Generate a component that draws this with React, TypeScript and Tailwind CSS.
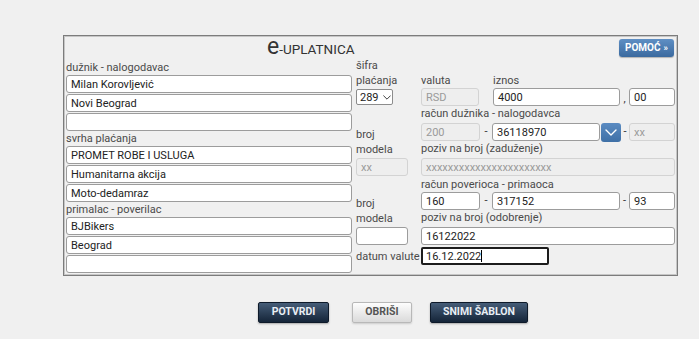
import React from "react";

const inp =
  "h-[18px] border border-[#9c9c9c] rounded-[3px] bg-white pl-[4px] flex items-center text-[11px] text-[#222] leading-none whitespace-nowrap overflow-hidden";
const dis =
  "h-[18px] border border-[#d3d3d3] rounded-[3px] bg-[#eeeeee] pl-[4px] flex items-center text-[11px] text-[#9a9a9a] leading-none whitespace-nowrap overflow-hidden";
const lbl = "h-[15px] text-[11px] leading-[15px] text-[#4a4a4a] whitespace-nowrap";

function Group({ label, values }: { label: string; values: string[] }) {
  return (
    <div className="flex flex-col">
      <div className={lbl}>{label}</div>
      <div className="flex flex-col gap-[1px]">
        {values.map((v, i) => (
          <div key={i} className={inp}>
            {v}
          </div>
        ))}
      </div>
    </div>
  );
}

function Chevron({ className, color, w }: { className?: string; color: string; w: number }) {
  return (
    <svg className={className} width={w} height={w / 2 + 1} viewBox="0 0 12 7" fill="none">
      <path d="M1 1 L6 6 L11 1" stroke={color} strokeWidth="1.4" strokeLinecap="round" strokeLinejoin="round" />
    </svg>
  );
}

export default function App() {
  return (
    <div className="w-[699px] h-[339px] bg-[#f0f0f0] font-['Roboto',sans-serif] pt-[35px] pl-[63px] overflow-hidden">
      <div className="w-[615px] border border-[#7c7c7c] shadow-[inset_1px_1px_0_#c6c6c6,inset_-1px_-1px_0_#c6c6c6] px-[2px] pb-[2px]">
        {/* header */}
        <div className="h-[22px] flex items-start">
          <div className="ml-[201px] flex items-baseline text-[#333]">
            <span className="text-[23px] leading-[22px]">e</span>
            <span className="text-[13.5px] leading-[22px]">-UPLATNICA</span>
          </div>
          <div className="ml-auto mr-[1px] mt-[3px] h-[18px] w-[55px] rounded-[3px] bg-linear-to-b from-[#5f8fc4] to-[#3b6a9f] flex items-center justify-center text-white text-[10px] font-bold leading-none shadow-[0_1px_1px_rgba(0,0,0,0.25)]">
            POMOĆ <span className="ml-[3px] text-[9px]">»</span>
          </div>
        </div>

        {/* body */}
        <div className="flex">
          {/* left column */}
          <div className="w-[286px] mt-[2px] flex flex-col">
            <Group label="dužnik - nalogodavac" values={["Milan Korovljević", "Novi Beograd", ""]} />
            <Group label="svrha plaćanja" values={["PROMET ROBE I USLUGA", "Humanitarna akcija", "Moto-dedamraz"]} />
            <Group label="primalac - poverilac" values={["BJBikers", "Beograd", ""]} />
          </div>

          {/* middle + right */}
          <div className="ml-[4px] w-[319px] flex flex-col">
            <div className="flex">
              {/* middle column */}
              <div className="w-[54px] flex flex-col">
                <div className="text-[11px] leading-[15px] text-[#4a4a4a]">
                  šifra
                  <br />
                  plaćanja
                </div>
                <div className="mt-[1px] h-[16px] w-[37px] border border-[#8c8c8c] rounded-[2px] bg-white flex items-center pl-[3px] text-[11px] text-[#222] leading-none">
                  289
                  <Chevron className="ml-[4px]" color="#333" w={8} />
                </div>
                <div className="mt-[22px] text-[11px] leading-[15px] text-[#4a4a4a]">
                  broj
                  <br />
                  modela
                </div>
                <div className={dis + " mt-[1px] w-[52px]"}>xx</div>
                <div className="mt-[20px] text-[11px] leading-[15px] text-[#4a4a4a]">
                  broj
                  <br />
                  modela
                </div>
                <div className={inp + " mt-[1px] w-[52px]"}></div>
              </div>

              {/* right column */}
              <div className="ml-[11px] w-[254px] pt-[15px] flex flex-col">
                <div className="flex">
                  <div className={lbl + " w-[72px]"}>valuta</div>
                  <div className={lbl}>iznos</div>
                </div>
                <div className="flex h-[18px] items-stretch">
                  <div className={dis + " w-[58px]"}>RSD</div>
                  <div className="w-[14px]" />
                  <div className={inp + " w-[127px]"}>4000</div>
                  <div className="w-[9px] flex items-end justify-center text-[11px] leading-[15px] text-[#333]">,</div>
                  <div className={inp + " w-[46px]"}>00</div>
                </div>

                <div className={lbl}>račun dužnika - nalogodavca</div>
                <div className="mt-[2px] flex h-[18px]">
                  <div className={dis + " w-[59px]"}>200</div>
                  <div className="w-[12px] flex items-center justify-center text-[11px] text-[#333]">-</div>
                  <div className={inp + " w-[108px]"}>36118970</div>
                  <div className="ml-[1px] w-[20px] h-[19px] rounded-[3px] bg-linear-to-b from-[#5a8bc2] to-[#3f70a6] flex items-center justify-center">
                    <Chevron color="#ffffff" w={12} />
                  </div>
                  <div className="w-[8px] flex items-center justify-center text-[11px] text-[#333]">-</div>
                  <div className={dis + " w-[46px]"}>xx</div>
                </div>

                <div className={lbl}>poziv na broj (zaduženje)</div>
                <div className={dis + " mt-[2px] w-[254px] text-[10.5px]"}>xxxxxxxxxxxxxxxxxxxxxxx</div>

                <div className={lbl + " mt-[1px]"}>račun poverioca - primaoca</div>
                <div className="flex h-[18px]">
                  <div className={inp + " w-[59px]"}>160</div>
                  <div className="w-[12px] flex items-center justify-center text-[11px] text-[#333]">-</div>
                  <div className={inp + " w-[128px]"}>317152</div>
                  <div className="w-[9px] flex items-center justify-center text-[11px] text-[#333]">-</div>
                  <div className={inp + " w-[46px]"}>93</div>
                </div>

                <div className={lbl}>poziv na broj (odobrenje)</div>
                <div className={inp + " mt-[2px] w-[254px]"}>16122022</div>
              </div>
            </div>

            {/* datum row */}
            <div className="mt-[2px] flex items-center h-[18px]">
              <div className="w-[65px] text-[11px] leading-[15px] text-[#4a4a4a] whitespace-nowrap">datum valute</div>
              <div className="h-[18px] w-[128px] border-2 border-[#1c1c1c] rounded-[2px] bg-white pl-[3px] flex items-center text-[11px] text-[#222] leading-none">
                16.12.2022
                <span className="inline-block w-[1px] h-[12px] bg-black" />
              </div>
            </div>
          </div>
        </div>
      </div>

      {/* buttons */}
      <div className="mt-[26px] ml-[195px] flex items-center">
        <div className="w-[71px] h-[21px] rounded-[2px] border border-[#0e1a2a] bg-linear-to-b from-[#465d78] to-[#152539] flex items-center justify-center text-[#e9eef4] text-[10.5px] font-bold leading-none shadow-[0_1px_2px_rgba(0,0,0,0.3)]">
          POTVRDI
        </div>
        <div className="ml-[23px] w-[60px] h-[21px] rounded-[2px] border border-[#b8b8b8] bg-linear-to-b from-[#fdfdfd] to-[#dadada] flex items-center justify-center text-[#555] text-[10.5px] font-bold leading-none shadow-[0_1px_2px_rgba(0,0,0,0.15)]">
          OBRIŠI
        </div>
        <div className="ml-[18px] w-[98px] h-[21px] rounded-[2px] border border-[#0e1a2a] bg-linear-to-b from-[#465d78] to-[#152539] flex items-center justify-center text-[#e9eef4] text-[10.5px] font-bold leading-none shadow-[0_1px_2px_rgba(0,0,0,0.3)]">
          SNIMI ŠABLON
        </div>
      </div>
    </div>
  );
}
